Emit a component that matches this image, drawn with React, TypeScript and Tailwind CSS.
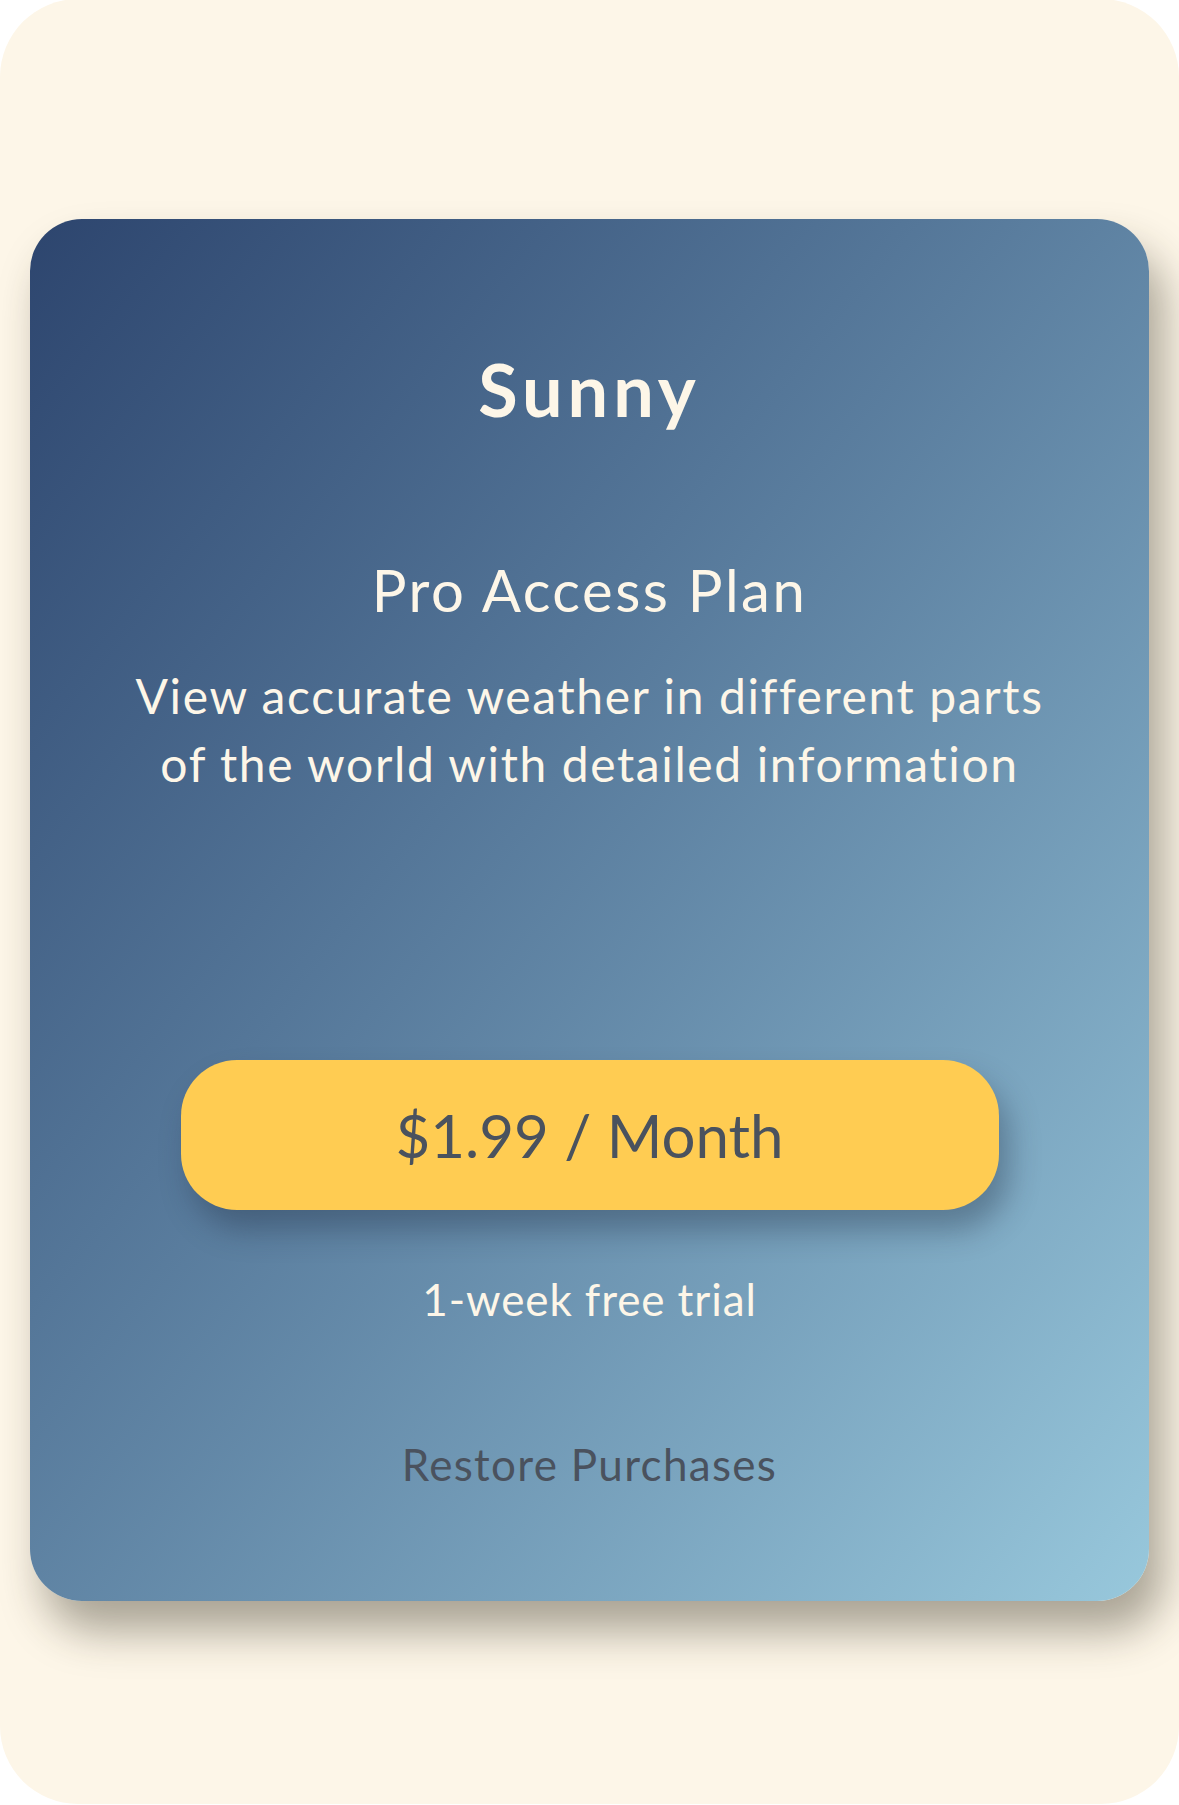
import React from "react";

const font = { fontFamily: "Lato, 'Open Sans', sans-serif" };

function PlanCard() {
  return (
    <div className="mx-[30px] mt-[219px] h-[1382px] rounded-[52px] bg-linear-to-br from-[#2d456e] to-[#98c8dc] shadow-[14px_30px_44px_rgba(45,40,25,0.4)] flex flex-col items-center text-center">
      <h1 className="mt-[127px] text-[72px] leading-[1.2] font-bold tracking-[5px] text-[#fdf6e8]">Sunny</h1>

      <h2 className="mt-[123px] text-[58px] leading-[1.2] tracking-[2.5px] text-[#fdf6e8]">Pro Access Plan</h2>
      <p className="mt-[37px] w-[950px] text-[48px] leading-[68px] tracking-[1.6px] text-[#fdf6e8]">
        View accurate weather in different parts of the world with detailed information
      </p>

      <button className="mt-[262px] w-[818px] h-[150px] rounded-[56px] bg-[#ffcc52] shadow-[10px_20px_30px_rgba(30,40,60,0.35)] flex items-center justify-center">
        <span className="text-[60px] leading-[1.2] text-[#4a525e]">$1.99 / Month</span>
      </button>

      <p className="mt-[63px] text-[44px] leading-[1.2] tracking-[0.9px] text-[#fdf6e8]">1-week free trial</p>

      <button className="mt-[112px] text-[44px] leading-[1.2] tracking-[1.3px] text-[#4a525e]">Restore Purchases</button>
    </div>
  );
}

export default function App() {
  return (
    <div className="bg-white w-[1179px] h-[1805px]" style={font}>
      <div className="h-full rounded-[78px] bg-[#fdf6e8] overflow-hidden pt-px -mt-px">
        <PlanCard />
      </div>
    </div>
  );
}
